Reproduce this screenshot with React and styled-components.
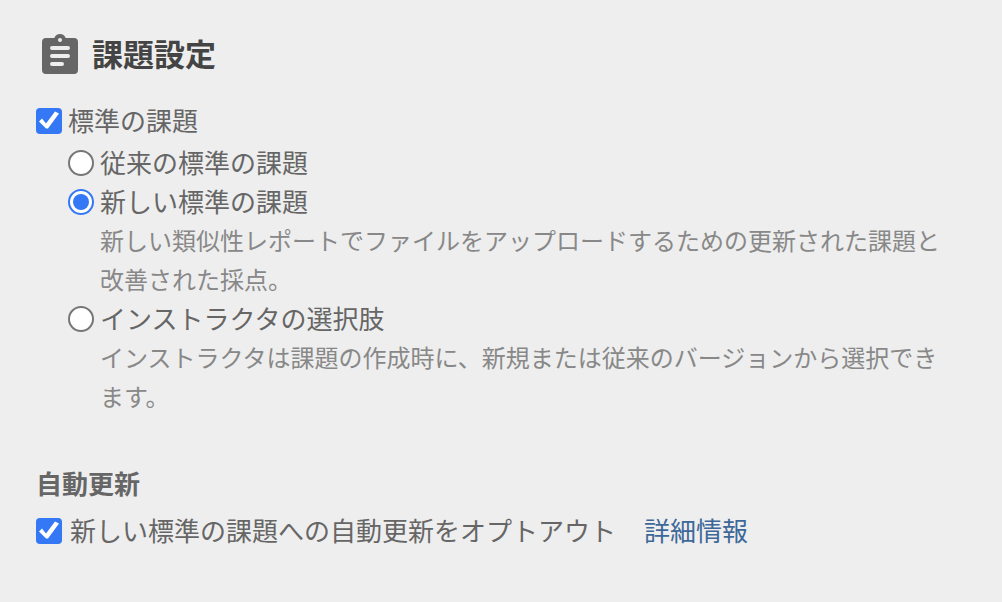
import React, { useState } from 'react'
import styled, { createGlobalStyle } from 'styled-components'

const GlobalStyle = createGlobalStyle`
    * { box-sizing: border-box; }
    body {
        margin: 0; background: #eeeeee; color: #666666;
        font-family: "Noto Sans CJK JP", sans-serif; font-size: 26px; line-height: 39px;
    }
`
const Page = styled.main`
    padding: 31px 56px 48px 36px;
`
const TitleRow = styled.header`
    display: flex; align-items: center; gap: 14px; height: 46px; padding-left: 6px; margin-bottom: 23px;
`
const Title = styled.h1`
    margin: 0; padding-bottom: 2px; font-size: 31px; line-height: 44px; font-weight: bold; color: #444444;
`
const SubTitle = styled.h2`
    margin: 48px 0 8px; font-size: 26px; line-height: 39px; font-weight: bold;
`
const Row = styled.div`
    display: flex; align-items: center; gap: ${props => props.$wide ? '8px' : '6px'};
`
const RadioGroup = styled.div`
    padding: 3px 0 0 32px;
`
const Label = styled.label`
    cursor: pointer;
`
const Description = styled.p`
    margin: 0 0 0 32px; font-size: 24px; line-height: 39px; color: #888888;
`
const Checkbox = styled.input.attrs({ type: 'checkbox' })`
    appearance: none; flex: none; width: 26px; height: 26px; margin: 2px 0 0;
    border: 2px solid #767676; border-radius: 4px; background: #ffffff;
    &:checked { border: 0; background: #3478f6; }
    &:checked::before {
        content: ''; display: block; width: 26px; height: 26px; background: #ffffff;
        clip-path: polygon(3px 14px, 6px 11px, 10px 16px, 19px 4px, 23px 6px, 12px 21px, 10px 21px);
    }
`
const Radio = styled.input.attrs({ type: 'radio' })`
    appearance: none; flex: none; display: grid; place-items: center;
    width: 26px; height: 26px; margin: 2px 0 0;
    border: 2px solid #767676; border-radius: 50%; background: #ffffff;
    &:checked { border-color: #3478f6; }
    &:checked::before {
        content: ''; width: 16px; height: 16px; border-radius: 50%; background: #3478f6;
    }
`
const MoreLink = styled.a`
    margin-left: 20px; color: #3d6899; text-decoration: none;
`

const ClipboardIcon = () => (
    <svg width="36" height="40" viewBox="0 0 36 40" aria-hidden="true">
        <path
            fill="#666666"
            d="M4 4H12.3C13.3 1.6 15.4 0 18 0S22.7 1.6 23.7 4H32A4 4 0 0 1 36 8V36A4 4 0 0 1 32 40H4A4 4 0 0 1 0 36V8A4 4 0 0 1 4 4Z"
        />
        <circle cx="18" cy="6" r="2" fill="#eeeeee" />
        <path d="M10 14H26M10 22H26M10 30H20" stroke="#eeeeee" strokeWidth="4" strokeLinecap="round" />
    </svg>
)

const options = [
    { id: 'classic', label: '従来の標準の課題' },
    {
        id: 'new',
        label: '新しい標準の課題',
        description: '新しい類似性レポートでファイルをアップロードするための更新された課題と改善された採点。',
    },
    {
        id: 'instructor',
        label: 'インストラクタの選択肢',
        description: 'インストラクタは課題の作成時に、新規または従来のバージョンから選択できます。',
    },
]

const App = () => {
    const [standard, setStandard] = useState(true)
    const [version, setVersion] = useState('new')
    const [optOut, setOptOut] = useState(true)

    return (
        <>
            <GlobalStyle />
            <Page>
                <TitleRow>
                    <ClipboardIcon />
                    <Title>課題設定</Title>
                </TitleRow>

                <Row>
                    <Checkbox id="standard" checked={standard} onChange={e => setStandard(e.target.checked)} />
                    <Label id="standard-label" htmlFor="standard">標準の課題</Label>
                </Row>
                <RadioGroup role="radiogroup" aria-labelledby="standard-label">
                    {options.map(option => (
                        <div key={option.id}>
                            <Row>
                                <Radio
                                    id={option.id}
                                    name="version"
                                    checked={version === option.id}
                                    onChange={() => setVersion(option.id)}
                                />
                                <Label htmlFor={option.id}>{option.label}</Label>
                            </Row>
                            {option.description && <Description>{option.description}</Description>}
                        </div>
                    ))}
                </RadioGroup>

                <SubTitle>自動更新</SubTitle>
                <Row $wide>
                    <Checkbox id="optout" checked={optOut} onChange={e => setOptOut(e.target.checked)} />
                    <Label htmlFor="optout">新しい標準の課題への自動更新をオプトアウト</Label>
                    <MoreLink href="#">詳細情報</MoreLink>
                </Row>
            </Page>
        </>
    )
}

export default App
